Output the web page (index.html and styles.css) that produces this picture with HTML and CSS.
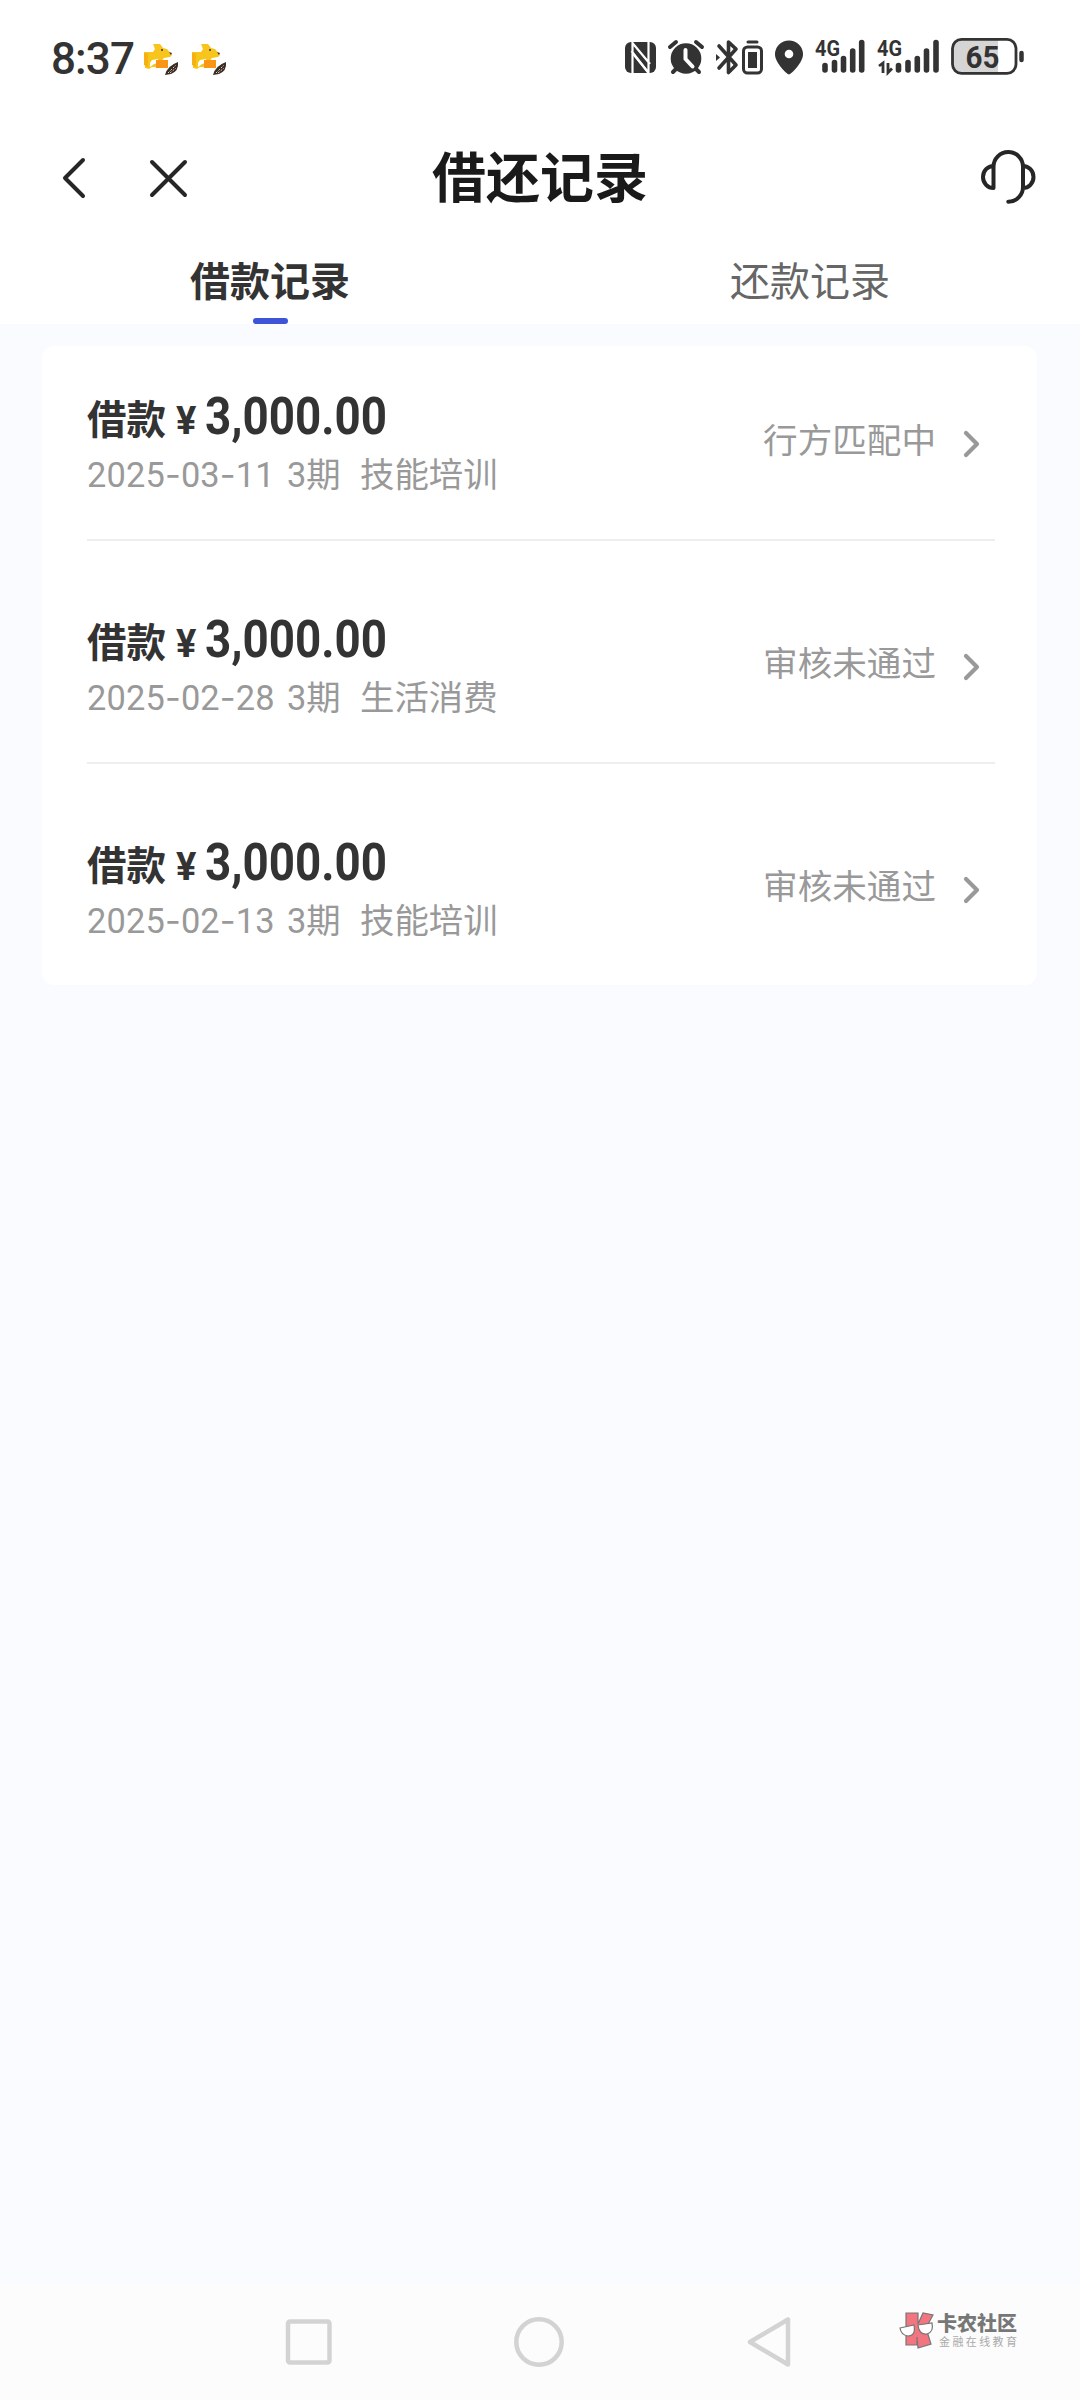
FILE: index.html
```html
<!DOCTYPE html>
<html lang="zh-CN">
<head>
<meta charset="utf-8">
<title>借还记录</title>
<link rel="stylesheet" href="styles.css">
</head>
<body>
<svg class="defs" aria-hidden="true">
  <symbol id="fox" viewBox="0 0 38 36">
    <path fill="#f8c51c" d="M1 11l8 0 2-3-2-5 7 0 3 4 4 1 5 6-2 2-6 1-4 5v4H12l-4 0-3 2-4-1z"/>
    <path fill="#f5b014" d="M0 11l4 2v13l-4-2z"/>
    <path fill="#fff" d="M8 19l6-1 0 4-4 1-4 3 0-4z"/>
    <path fill="#fa9616" d="M12 19h12v8H12z"/>
    <circle cx="18" cy="9" r="1" fill="#333"/>
    <path fill="#3a2c22" d="M25 11l3 1-1 2zM21 34q2-9 13-13 1 9-7 12z"/>
    <path stroke="#d9cfc5" stroke-width="1" fill="none" stroke-dasharray="2 1.5" d="M24 32l8-8M26 32l6-5"/>
  </symbol>
</svg>

<header class="status">
  <span class="time">8:37</span>
  <svg class="fox" width="38" height="36"><use href="#fox"/></svg>
  <svg class="fox" width="38" height="36"><use href="#fox"/></svg>
  <div class="tray">
    <svg width="40" height="40" viewBox="622 36 40 40">
      <rect x="625" y="42" width="31" height="31" rx="6" fill="#333"/>
      <path d="M632.5 73V43L650 64M648.500 42v31L631.500 51" fill="none" stroke="#fff" stroke-width="2.200"/>
      <path d="M634 55l14 17" stroke="#fff" stroke-width="2"/>
    </svg>
    <svg width="48" height="40" viewBox="662 36 48 40">
      <circle cx="686" cy="58.500" r="15.300" fill="#333"/>
      <path d="M670 47l6-5M702 47l-6-5M676 69l-3 3M696 69l3 3" stroke="#333" stroke-width="4" stroke-linecap="round"/>
      <path d="M685.500 50v9l7 7.500" fill="none" stroke="#fff" stroke-width="4" stroke-linecap="round" stroke-linejoin="round"/>
    </svg>
    <svg width="58" height="40" viewBox="710 36 58 40">
      <path d="M719 46l17 19-7.500 7.500V42l7.500 7-17 19" fill="none" stroke="#333" stroke-width="3.600" stroke-linejoin="round" stroke-linecap="round"/>
      <path d="M716 54l4 3.500-4 3.500z" fill="#333"/>
      <rect x="743.500" y="47" width="18" height="26" rx="4" fill="none" stroke="#333" stroke-width="3"/>
      <rect x="748" y="52" width="9" height="16" fill="#333"/>
      <path d="M748 42h9" stroke="#333" stroke-width="3" stroke-linecap="round"/>
    </svg>
    <svg width="42" height="40" viewBox="768 36 42 40">
      <path d="M789 74.500c-2 0-14-12-14-20a14 14 0 0 1 28 0c0 8-12 20-14 20z" fill="#333"/>
      <circle cx="789" cy="54" r="4.300" fill="#fff"/>
    </svg>
    <svg width="60" height="40" viewBox="810 36 60 40">
      <text class="net" x="815" y="56" textLength="25" lengthAdjust="spacingAndGlyphs">4G</text>
      <path d="M825 65.500V70M834.500 62.500V70M843.500 58.500V70M852.700 51V70M861.700 42.500V70" class="bars"/>
    </svg>
    <svg width="75" height="40" viewBox="870 36 75 40">
      <text class="net" x="877" y="56" textLength="25" lengthAdjust="spacingAndGlyphs">4G</text>
      <path d="M879 66l4-3v10M888 63v9.500l4-4" fill="none" stroke="#333" stroke-width="2.800"/>
      <path d="M898.500 65.500V70M908 62.500V70M917.300 58.500V70M926.500 51V70M936 42.500V70" class="bars"/>
    </svg>
    <svg width="85" height="40" viewBox="945 36 85 40">
      <path d="M962 40h36v33h-36q-9 0-9-9V49q0-9 9-9z" fill="#d5d5d5"/>
      <rect x="952.500" y="39.300" width="63.500" height="34" rx="9" fill="none" stroke="#333" stroke-width="2.800"/>
      <path d="M1021.500 53v7" stroke="#333" stroke-width="4.500" stroke-linecap="round"/>
      <text class="level" x="965.500" y="67.500" textLength="34" lengthAdjust="spacingAndGlyphs">65</text>
    </svg>
  </div>
</header>

<nav class="titlebar">
  <div class="actions">
    <svg width="28" height="46" viewBox="0 0 28 46"><path d="M23 5L5 23l18 18" class="line"/></svg>
    <svg width="46" height="46" viewBox="0 0 46 46"><path d="M6 7l33 33M39 7L6 40" class="line"/></svg>
  </div>
  <h1>借还记录</h1>
  <svg class="service" width="60" height="60" viewBox="0 0 60 60">
    <path d="M13.500 40V18.750a14.750 14.750 0 0 1 29.500 0V39a14.750 14.750 0 0 1-14.750 14.750M13.500 18a10.500 11 0 0 0 0 22M43 18a10.500 11 0 0 1 0 22" class="line"/>
  </svg>
</nav>

<div class="tabs">
  <div class="tab active">借款记录</div>
  <div class="tab">还款记录</div>
</div>

<main>
  <section class="card">
    <article class="row">
      <div class="info">
        <div class="amount">借款<span class="yen">¥</span><span class="num">3,000.00</span></div>
        <div class="meta"><span class="date">2025<i>-</i>03<i>-</i>11</span><span class="term">3期</span><span>技能培训</span></div>
      </div>
      <div class="state">行方匹配中</div>
      <svg class="more" width="18" height="30" viewBox="0 0 18 30"><path d="M3 4l11 11L3 26"/></svg>
    </article>
    <article class="row">
      <div class="info">
        <div class="amount">借款<span class="yen">¥</span><span class="num">3,000.00</span></div>
        <div class="meta"><span class="date">2025<i>-</i>02<i>-</i>28</span><span class="term">3期</span><span>生活消费</span></div>
      </div>
      <div class="state">审核未通过</div>
      <svg class="more" width="18" height="30" viewBox="0 0 18 30"><path d="M3 4l11 11L3 26"/></svg>
    </article>
    <article class="row">
      <div class="info">
        <div class="amount">借款<span class="yen">¥</span><span class="num">3,000.00</span></div>
        <div class="meta"><span class="date">2025<i>-</i>02<i>-</i>13</span><span class="term">3期</span><span>技能培训</span></div>
      </div>
      <div class="state">审核未通过</div>
      <svg class="more" width="18" height="30" viewBox="0 0 18 30"><path d="M3 4l11 11L3 26"/></svg>
    </article>
  </section>
</main>

<footer class="sysnav">
  <svg width="54" height="54" viewBox="0 0 54 54"><rect x="6" y="6.500" width="41.500" height="41" rx="2"/></svg>
  <svg width="54" height="54" viewBox="0 0 54 54"><circle cx="27" cy="27" r="22.700"/></svg>
  <svg width="54" height="54" viewBox="0 0 54 54"><path d="M46 4.500v45L8 27z"/></svg>
  <div class="mark">
    <svg width="36" height="38" viewBox="0 0 36 38">
      <path d="M7 2h12v11l5-11 10 2-7 13 5 16-13 4-1-11v8H7z" fill="#f27580" stroke="#777" stroke-width="1.200"/>
      <path d="M1 17l14-3q2 11-6 11-7-1-8-8zM19 14l14-2q2 9-5 11-8 1-9-9z" fill="#fff" stroke="#777" stroke-width="1.200"/>
    </svg>
    <div class="marktext"><b>卡农社区</b><small>金融在线教育</small></div>
  </div>
</footer>
</body>
</html>
```

FILE: styles.css
```css
* { box-sizing: border-box; }
body {
  margin: 0;
  height: 2400px;
  display: flex;
  flex-direction: column;
  background: #fafbff;
  color: #333;
  font-family: Roboto, "Noto Sans CJK SC", sans-serif;
}
svg { display: block; flex: none; }
.defs { position: absolute; width: 0; height: 0; }

.status {
  height: 112px;
  padding: 0 50px 0 51px;
  display: flex;
  align-items: center;
  background: #fff;
}
.time { width: 92px; font-size: 44px; font-weight: 500; letter-spacing: -.9px; line-height: 52px; margin-top: 6px; }
.fox { margin: 5px 9px 0 1px; }
.tray { display: flex; margin-left: auto; }
.net { font: 700 22px Roboto, sans-serif; fill: #333; }
.level { font: 700 31px Roboto, sans-serif; fill: #333; }
.bars { fill: none; stroke: #333; stroke-width: 5.600; stroke-linecap: round; }

.titlebar {
  height: 132px;
  padding: 0 40px 0 60px;
  display: grid;
  grid-template-columns: 1fr auto 1fr;
  align-items: center;
  background: #fff;
}
.actions { display: flex; gap: 58px; }
h1 { margin: 3px 20px 0 0; font-size: 54px; line-height: 60px; font-weight: 700; color: #1a1a1a; }
.service { justify-self: end; }
.line { fill: none; stroke: #262626; stroke-width: 4; stroke-linecap: round; stroke-linejoin: round; }

.tabs { height: 80px; display: flex; background: #fff; }
.tab {
  flex: 1;
  display: flex;
  flex-direction: column;
  align-items: center;
  justify-content: space-between;
  padding-top: 9px;
  font-size: 40px;
  line-height: 60px;
  color: #666;
}
.active { font-weight: 700; color: #333; }
.active::after { content: ""; width: 35px; height: 6px; border-radius: 3px; background: #3d54d8; }

main { flex: 1; padding: 22px 43px 0 42px; }
.card { height: 639px; padding: 0 42px 0 45px; border-radius: 12px; background: #fff; }
.row {
  height: 195px;
  display: flex;
  align-items: center;
  border-bottom: 2px solid #eee;
}
.row + .row { margin-top: 28px; }
.row:last-child { border-color: transparent; }
.info { flex: 1; }
.amount { display: flex; align-items: baseline; height: 60px; font-size: 39.500px; line-height: 60px; font-weight: 700; }
.yen { width: 39px; padding-left: 10px; font-size: 38px; }
.num { font-size: 52px; transform: scaleX(.88); transform-origin: left; }
.meta { display: flex; height: 52px; font-size: 34.400px; line-height: 56px; color: #999; }
.meta i { font-family: Inter, sans-serif; font-style: normal; }
.date { width: 200px; letter-spacing: .15px; }
.term { width: 73px; }
.state { margin-top: -3px; font-size: 34.600px; line-height: 50px; color: #999; }
.more { margin: 3px 14px 0 27px; }
.more path { fill: none; stroke: #999; stroke-width: 4.200; stroke-linecap: round; stroke-linejoin: round; }

.sysnav {
  position: relative;
  height: 115px;
  padding: 30px 284px 0 282px;
  display: flex;
  align-items: flex-start;
  justify-content: space-between;
  background: #fcfcfc;
}
.sysnav > svg { fill: none; stroke: #d3d3d3; stroke-width: 4.500; stroke-linejoin: round; }
.mark { position: absolute; left: 899px; top: 26px; display: flex; gap: 2px; }
.marktext { display: flex; flex-direction: column; white-space: nowrap; }
.marktext b { font-size: 20px; line-height: 26px; color: #777; font-weight: 900; }
.marktext small { margin-left: 2px; font-size: 11px; line-height: 12px; letter-spacing: 2.400px; color: #aaa; }
```
